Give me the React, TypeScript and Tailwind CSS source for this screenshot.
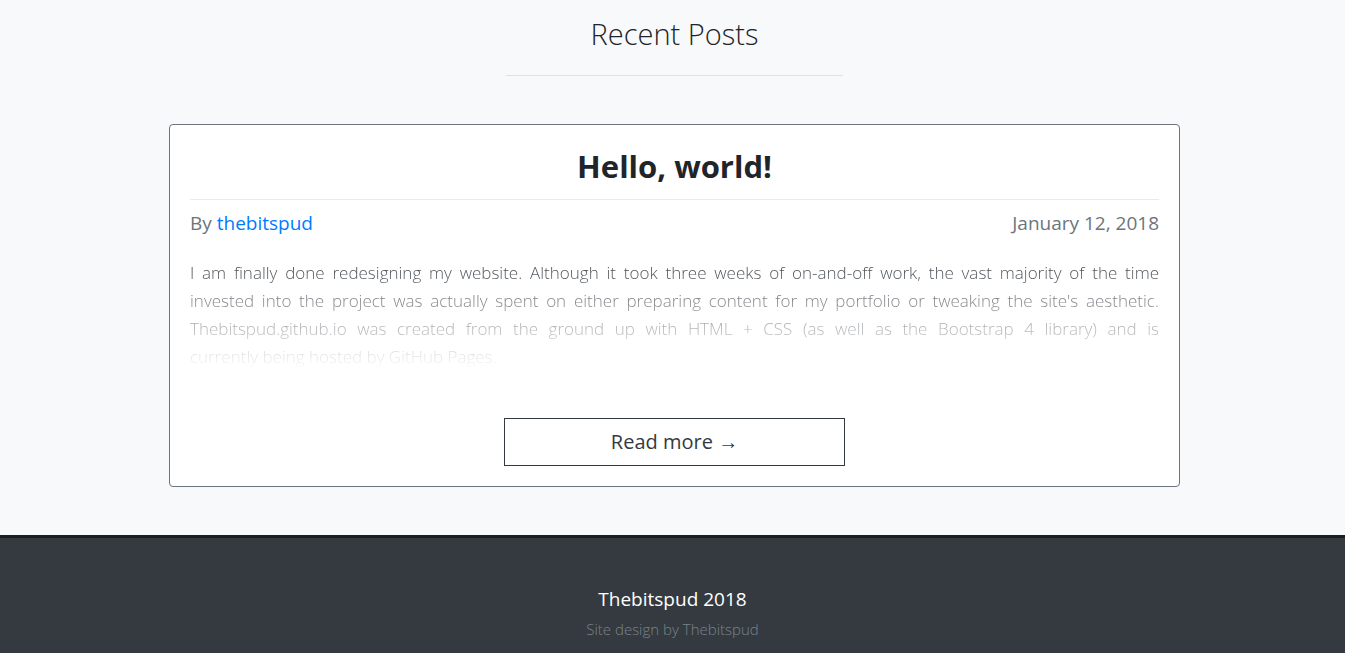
import React from "react";

const lines = [
  "I am finally done redesigning my website. Although it took three weeks of on-and-off work, the vast majority of the time",
  "invested into the project was actually spent on either preparing content for my portfolio or tweaking the site's aesthetic.",
  "Thebitspud.github.io was created from the ground up with HTML + CSS (as well as the Bootstrap 4 library) and is",
];

export default function App() {
  return (
    <div className="min-h-screen bg-[#f8f9fa] font-['Open_Sans','Noto_Sans',sans-serif] text-[#212529]">
      <div className="pl-[4px]">
        <div className="pt-[14px] flex flex-col items-center">
          <h2 className="text-[29px] leading-[40px] font-light text-[#212529]">Recent Posts</h2>
          <div className="mt-[21px] w-[337px] h-px bg-[#dee2e6]" />
        </div>

        <div className="mx-auto mt-[48px] w-[1011px] bg-white border border-[#6c757d] rounded-[4px] px-[20px] pt-[21px] pb-[20px]">
          <h1 className="text-center text-[31px] leading-[40px] font-bold text-[#212529]">Hello, world!</h1>
          <div className="mt-[13px] h-px bg-[#e9ecef]" />
          <div className="mt-[8px] flex justify-between text-[19px] leading-[30px] text-[#6c757d]">
            <span>
              By <a className="text-[#007bff]">thebitspud</a>
            </span>
            <span>January 12, 2018</span>
          </div>
          <div className="mt-[21px] text-[17px] leading-[28px] font-light text-[#4a5056] [mask-image:linear-gradient(to_bottom,#000_8%,transparent_100%)]">
            {lines.map((l, i) => (
              <div key={i} className="text-justify [text-align-last:justify] whitespace-nowrap">
                {l}
              </div>
            ))}
            <div>currently being hosted by GitHub Pages.</div>
          </div>
          <div className="mt-[47px] flex justify-center">
            <button className="w-[341px] h-[48px] border border-[#343a40] text-[20px] text-[#343a40] bg-white">
              Read more →
            </button>
          </div>
        </div>
      </div>

      <footer className="mt-[48px] border-t-[3px] border-[#1b1e21] bg-[#343a40] h-[150px] flex flex-col items-center pt-[47px]">
        <div className="text-[19px] leading-[28px] text-white">Thebitspud 2018</div>
        <div className="mt-[5px] text-[15px] leading-[22px] font-light text-[#7a838b]">Site design by Thebitspud</div>
      </footer>
    </div>
  );
}
